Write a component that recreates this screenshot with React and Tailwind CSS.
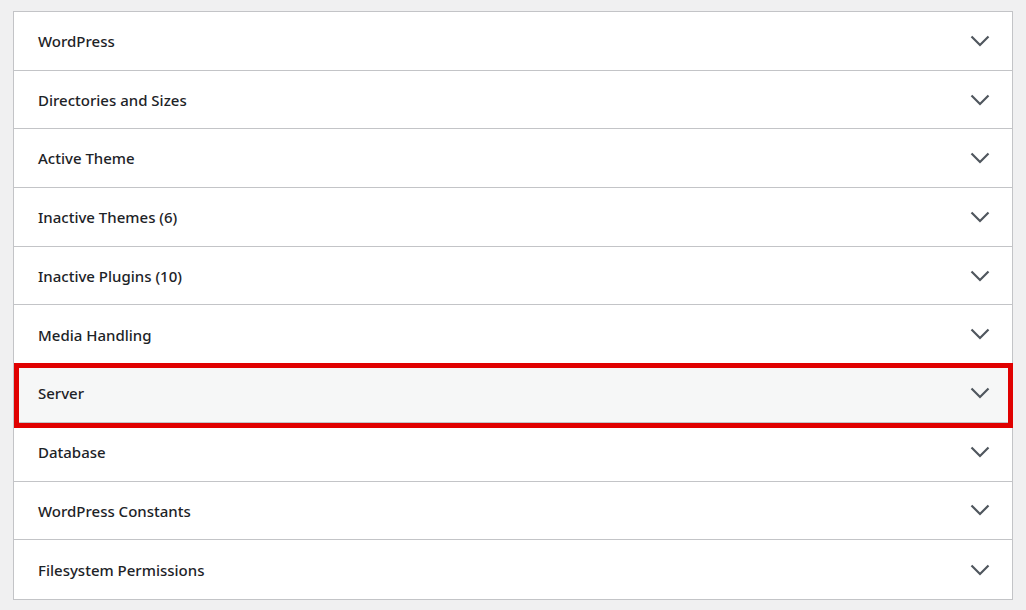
import React from 'react';

const SECTIONS = [
    'WordPress',
    'Directories and Sizes',
    'Active Theme',
    'Inactive Themes (6)',
    'Inactive Plugins (10)',
    'Media Handling',
    'Server',
    'Database',
    'WordPress Constants',
    'Filesystem Permissions',
];

function Chevron() {
    return (
        <svg width="20" height="12" viewBox="0 0 20 12" fill="none" className="text-[#50575e]">
            <path d="M1.5 1.5 L10 10 L18.5 1.5" stroke="currentColor" strokeWidth="2.2" />
        </svg>
    );
}

export default function App() {
    return (
        <div className="min-h-screen bg-[#f0f0f1] pt-[11px] pl-[13px]" style={{ fontFamily: '"Noto Sans", "Open Sans", sans-serif' }}>
            <div className="w-[1000px] bg-white border border-[#c3c4c7]">
                {SECTIONS.map((label, i) => {
                    const active = label === 'Server';
                    return (
                        <div
                            key={label}
                            className={`relative h-[58.7px] flex items-center justify-between pl-6 pr-[22px] ${i < SECTIONS.length - 1 ? 'border-b border-[#c3c4c7]' : ''} ${active ? 'bg-[#f6f7f7]' : ''}`}
                        >
                            <span className="text-[15px] font-medium text-[#1d2327] pt-px">{label}</span>
                            <Chevron />
                            {active && (
                                <div className="absolute left-0 -top-[1px] -right-px -bottom-[6px] border-[5px] border-[#e00000] pointer-events-none" />
                            )}
                        </div>
                    );
                })}
            </div>
        </div>
    );
}
